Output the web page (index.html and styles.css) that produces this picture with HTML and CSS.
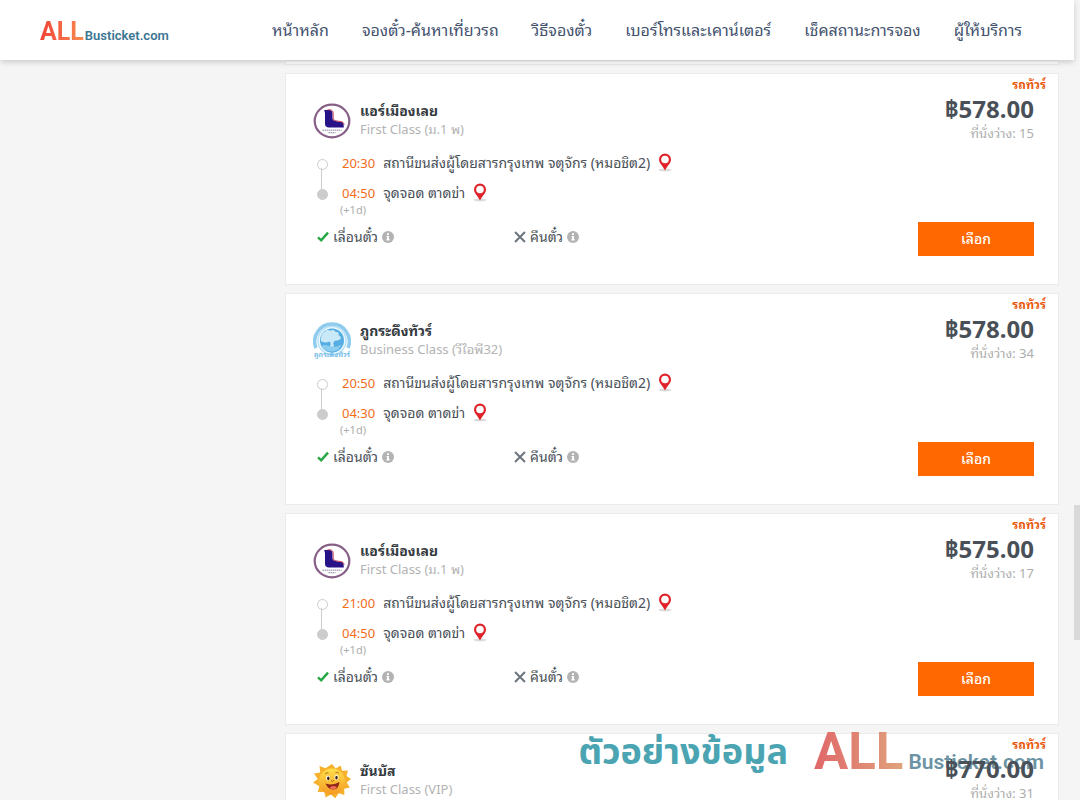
FILE: index.html
```html
<!DOCTYPE html>
<html lang="th">
<head>
    <meta charset="UTF-8">
    <meta name="viewport" content="width=device-width, initial-scale=1.0">
    <title>ALL Busticket.com</title>
    <link rel="stylesheet" href="styles.css">
</head>
<body>
    <!-- Shared icons -->
    <svg class="sprite" aria-hidden="true">
        <defs>
            <linearGradient id="sun-fill" x1="0" y1="0" x2="0" y2="1">
                <stop offset="0" stop-color="#ffe04a"/>
                <stop offset="1" stop-color="#f59a23"/>
            </linearGradient>
        </defs>
        <symbol id="icon-pin" viewBox="0 0 14 20">
            <ellipse cx="7" cy="17" rx="6.500" ry="1.500" fill="#dcdcdc"/>
            <path d="M7 .5A6 6 0 0 0 1 6.500C1 10.500 5 13 7 17.500c2-4.500 6-7 6-11A6 6 0 0 0 7 .5z" fill="#e02329"/>
            <circle cx="7" cy="6.500" r="3.800" fill="#fff"/>
        </symbol>
        <symbol id="icon-check" viewBox="0 0 12 12">
            <path d="M1 6.300l3.200 3L11 1.700" fill="none" stroke="#28a745" stroke-width="2.500"/>
        </symbol>
        <symbol id="icon-cross" viewBox="0 0 12 12">
            <path d="M1 1l10 10M11 1L1 11" fill="none" stroke="#6c757d" stroke-width="2"/>
        </symbol>
        <symbol id="icon-info" viewBox="0 0 12 12">
            <circle cx="6" cy="6" r="6" fill="#b3b3b3"/>
            <path d="M5 2.200h2v1.700H5zM4.500 4.900H7v3.400h.7v1.200H4.300V8.300H5V6.100h-.5z" fill="#fff"/>
        </symbol>
        <symbol id="logo-loei" viewBox="0 0 38 38">
            <ellipse cx="19" cy="19" rx="17.300" ry="16.300" fill="#fff" stroke="#875f86" stroke-width="2.200"/>
            <path d="M11 8h5.500c2 .2 3 1.500 3 3.500v4.500c0 2 1 2.600 3 3l6 1.100c1.800.5 2.300 2 2.300 5.400H16c-2.500 0-4-1.300-4-3.800V11.500c0-1.300-.3-2.500-1-3.500z" fill="#291388"/>
            <path d="M14.500 7.800h2.800c2 .2 2.900 1.500 2.900 3.400v4.600c0 2 1 2.600 3 3l5.800 1.100c1.500.4 2 1.500 2 3" fill="none" stroke="#c54a5d" stroke-width="1"/>
            <path d="M9.500 28.200h19M15.500 30.700h7" stroke="#8d87a2" stroke-width="1" stroke-dasharray="1.500 .5"/>
        </symbol>
        <symbol id="logo-phu" viewBox="0 0 38 38">
            <path d="M3 26A17.300 17.300 0 1 1 35 26" fill="none" stroke="#8fcbed" stroke-width="3.500"/>
            <circle cx="19" cy="18.500" r="14.800" fill="#b5def5"/>
            <circle cx="19" cy="18.500" r="13.500" fill="#e8f6fd"/>
            <circle cx="19" cy="18.500" r="12" fill="#55aee2"/>
            <path d="M8 19c-.5-4 1-8 4-9.500 1-2 4-2 5-.5 2-2 5-1 5.500 1 3-.5 4 2 3 3.500 3 .5 3 3.500.5 4.500-2 1-4 0-5 1.500-1 1.500-1 3 .5 5l-5 .5c1.500-2 1.500-4 0-5.500-3 1.500-7 1-8.500-.5z" fill="#c9e8f8"/>
            <path d="M8.500 24c3-2 6-.5 9 .5s7 .5 11-2c-2 4.500-5 7-9.500 7s-8.500-2-10.500-5.500z" fill="#8ccdf0"/>
            <text class="seal-text" x="19" y="35">ภูกระดึงทัวร์</text>
        </symbol>
        <symbol id="logo-sun" viewBox="0 0 38 38">
            <path d="M19 2l3.700 4.500 5-3 1.300 5.200 6-.2-1.500 5.400L38 17l-4.300 3.600 3.100 4.900-5.600 1.200.2 6.300-5.700-1.700-3.500 5-4.300-3.900-5.200 3-1.400-5.300-6.500 0 1.500-5.800L0 20.500 4.800 17 1 11.500l6.300-1L6.500 4l6 2.200z" fill="#f6b02c"/>
            <circle cx="19" cy="19.500" r="13" fill="url(#sun-fill)"/>
            <ellipse cx="15" cy="16" rx="2" ry="2.600" fill="#fff"/>
            <ellipse cx="23.500" cy="15.300" rx="2" ry="2.600" fill="#fff"/>
            <ellipse cx="15.300" cy="16.300" rx="1.200" ry="1.900" fill="#34210d"/>
            <ellipse cx="23.500" cy="15.600" rx="1.200" ry="1.900" fill="#34210d"/>
            <path d="M12 12q2-2 3.500-1M22.500 10.500q2.500-1 3.500 1M18 18.700q1.500 1.500 3-.5" fill="none" stroke="#a85d11" stroke-width=".9"/>
            <path d="M12.500 21.500q7.500 2.500 14-1.500-1 7.500-6 7.500-5.500 0-8-6z" fill="#902718"/>
            <path d="M16.500 26q3.500-3.500 7.500-.5-3.500 3.500-7.500.5z" fill="#ef6d55"/>
        </symbol>
    </svg>

    <div class="page">
        <header class="topbar">
            <a class="brand" href="#"><span class="brand-all">ALL</span><span class="brand-name">Busticket.com</span></a>
            <nav class="menu">
                <a href="#">หน้าหลัก</a>
                <a href="#">จองตั๋ว-ค้นหาเที่ยวรถ</a>
                <a href="#">วิธีจองตั๋ว</a>
                <a href="#">เบอร์โทรและเคาน์เตอร์</a>
                <a href="#">เช็คสถานะการจอง</a>
                <a href="#">ผู้ให้บริการ</a>
            </nav>
        </header>

        <main class="results">
            <div class="card card-end"></div>

            <article class="card">
                <div class="trip">
                    <div class="operator">
                        <svg class="operator-logo"><use href="#logo-loei"/></svg>
                        <div>
                            <h2>แอร์เมืองเลย</h2>
                            <p>First Class (ม.1 พ)</p>
                        </div>
                    </div>
                    <ul class="stops">
                        <li><time>20:30</time><span>สถานีขนส่งผู้โดยสารกรุงเทพ จตุจักร (หมอชิต2)</span><svg class="pin"><use href="#icon-pin"/></svg></li>
                        <li><time>04:50</time><span>จุดจอด ตาดข่า</span><svg class="pin"><use href="#icon-pin"/></svg></li>
                    </ul>
                    <p class="next-day">(+1d)</p>
                    <div class="policies">
                        <span><svg class="icon"><use href="#icon-check"/></svg>เลื่อนตั๋ว<svg class="icon"><use href="#icon-info"/></svg></span>
                        <span><svg class="icon"><use href="#icon-cross"/></svg>คืนตั๋ว<svg class="icon"><use href="#icon-info"/></svg></span>
                    </div>
                </div>
                <div class="fare">
                    <span class="badge">รถทัวร์</span>
                    <strong class="price">฿578.00</strong>
                    <span class="seats">ที่นั่งว่าง: 15</span>
                    <button type="button">เลือก</button>
                </div>
            </article>

            <article class="card">
                <div class="trip">
                    <div class="operator">
                        <svg class="operator-logo"><use href="#logo-phu"/></svg>
                        <div>
                            <h2>ภูกระดึงทัวร์</h2>
                            <p>Business Class (วีไอพี32)</p>
                        </div>
                    </div>
                    <ul class="stops">
                        <li><time>20:50</time><span>สถานีขนส่งผู้โดยสารกรุงเทพ จตุจักร (หมอชิต2)</span><svg class="pin"><use href="#icon-pin"/></svg></li>
                        <li><time>04:30</time><span>จุดจอด ตาดข่า</span><svg class="pin"><use href="#icon-pin"/></svg></li>
                    </ul>
                    <p class="next-day">(+1d)</p>
                    <div class="policies">
                        <span><svg class="icon"><use href="#icon-check"/></svg>เลื่อนตั๋ว<svg class="icon"><use href="#icon-info"/></svg></span>
                        <span><svg class="icon"><use href="#icon-cross"/></svg>คืนตั๋ว<svg class="icon"><use href="#icon-info"/></svg></span>
                    </div>
                </div>
                <div class="fare">
                    <span class="badge">รถทัวร์</span>
                    <strong class="price">฿578.00</strong>
                    <span class="seats">ที่นั่งว่าง: 34</span>
                    <button type="button">เลือก</button>
                </div>
            </article>

            <article class="card">
                <div class="trip">
                    <div class="operator">
                        <svg class="operator-logo"><use href="#logo-loei"/></svg>
                        <div>
                            <h2>แอร์เมืองเลย</h2>
                            <p>First Class (ม.1 พ)</p>
                        </div>
                    </div>
                    <ul class="stops">
                        <li><time>21:00</time><span>สถานีขนส่งผู้โดยสารกรุงเทพ จตุจักร (หมอชิต2)</span><svg class="pin"><use href="#icon-pin"/></svg></li>
                        <li><time>04:50</time><span>จุดจอด ตาดข่า</span><svg class="pin"><use href="#icon-pin"/></svg></li>
                    </ul>
                    <p class="next-day">(+1d)</p>
                    <div class="policies">
                        <span><svg class="icon"><use href="#icon-check"/></svg>เลื่อนตั๋ว<svg class="icon"><use href="#icon-info"/></svg></span>
                        <span><svg class="icon"><use href="#icon-cross"/></svg>คืนตั๋ว<svg class="icon"><use href="#icon-info"/></svg></span>
                    </div>
                </div>
                <div class="fare">
                    <span class="badge">รถทัวร์</span>
                    <strong class="price">฿575.00</strong>
                    <span class="seats">ที่นั่งว่าง: 17</span>
                    <button type="button">เลือก</button>
                </div>
            </article>

            <article class="card">
                <!-- Sample data watermark, sits behind the fare -->
                <div class="watermark">
                    <span class="watermark-label">ตัวอย่างข้อมูล</span>
                    <span class="watermark-all">ALL</span>
                    <span class="watermark-name">Busticket.com</span>
                </div>
                <div class="trip">
                    <div class="operator">
                        <svg class="operator-logo"><use href="#logo-sun"/></svg>
                        <div>
                            <h2>ซันบัส</h2>
                            <p>First Class (VIP)</p>
                        </div>
                    </div>
                </div>
                <div class="fare">
                    <span class="badge">รถทัวร์</span>
                    <strong class="price">฿770.00</strong>
                    <span class="seats">ที่นั่งว่าง: 31</span>
                </div>
            </article>
        </main>
        <div class="scroll-thumb"></div>
    </div>
</body>
</html>
```
FILE: styles.css
```css
* {
    box-sizing: border-box;
    margin: 0;
    padding: 0;
}

body {
    font-family: "Noto Sans", "Noto Sans Thai Looped", Loma, Waree, Garuda, sans-serif;
    font-size: 14px;
    color: #495057;
    background: #f5f5f5;
}

.sprite {
    position: absolute;
    width: 0;
    height: 0;
}

.page {
    position: relative;
    height: 100vh;
    padding-right: 6px;
    overflow: hidden;
}

.topbar {
    position: relative;
    z-index: 2;
    display: flex;
    align-items: center;
    justify-content: space-between;
    height: 60px;
    padding: 0 52px 0 40px;
    background: #fff;
    box-shadow: 0 2px 6px rgba(0, 0, 0, 0.18);
}

.brand {
    padding-top: 2px;
    font-family: Roboto, sans-serif;
    font-weight: 700;
    text-decoration: none;
}

.brand-all {
    font-size: 25px;
    background: linear-gradient(90deg, #f04438, #f88b50);
    background-clip: text;
    color: transparent;
}

.brand-name {
    margin-left: 1px;
    font-size: 13px;
    font-weight: 600;
    color: #3a7592;
}

.menu {
    display: flex;
    gap: 33px;
}

.menu a {
    font-size: 16px;
    line-height: 24px;
    color: #43526e;
    text-decoration: none;
}

.results {
    display: flex;
    flex-direction: column;
    gap: 8px;
    margin: 0 15px 0 285px;
}

.card {
    position: relative;
    display: flex;
    justify-content: space-between;
    flex-shrink: 0;
    min-height: 212px;
    padding-left: 27px;
    background: #fff;
    border: 1px solid #ebebeb;
}

.card-end {
    min-height: 5px;
}

.trip {
    padding-top: 28px;
}

.operator {
    display: flex;
    gap: 9px;
}

.operator-logo {
    width: 38px;
    height: 38px;
}

.operator h2 {
    font-size: 14px;
    line-height: 18px;
    color: #343a40;
}

.operator p {
    font-size: 13px;
    line-height: 18px;
    color: #b3b3b3;
}

.stops {
    position: relative;
    margin-top: 8px;
    list-style: none;
}

.stops::before {
    content: "";
    position: absolute;
    left: 8px;
    top: 20px;
    width: 1px;
    height: 24px;
    background: #ccc;
}

.stops li {
    display: flex;
    align-items: center;
    gap: 8px;
    height: 30px;
    line-height: 20px;
}

.stops li::before {
    content: "";
    width: 9px;
    height: 9px;
    margin: 3px 6px 0 4px;
    border: 1px solid #ccc;
    border-radius: 50%;
    background: #fff;
}

.stops li:last-child::before {
    background: #ccc;
}

.stops time {
    font-size: 13px;
    color: #f26c1a;
}

.pin {
    width: 14px;
    height: 20px;
}

.next-day {
    height: 14px;
    margin: -4px 0 0 27px;
    font-size: 11px;
    line-height: 12px;
    color: #adadad;
}

.policies {
    display: grid;
    grid-template-columns: 197px auto;
    margin-top: 7px;
    padding-left: 4px;
}

.policies span {
    display: flex;
    align-items: center;
    gap: 4px;
    line-height: 24px;
}

.icon {
    width: 12px;
    height: 12px;
}

.fare {
    position: relative;
    display: flex;
    flex-direction: column;
    align-items: flex-end;
    padding-right: 24px;
}

.badge {
    margin: 4px -12px 0 0;
    font-size: 12px;
    font-weight: 700;
    line-height: 14px;
    color: #e8590c;
}

.price {
    font-size: 24px;
    line-height: 34px;
    color: #495057;
}

.seats {
    font-size: 13px;
    line-height: 14px;
    color: #adadad;
}

.fare button {
    width: 116px;
    height: 34px;
    margin-top: 82px;
    border: none;
    background: #ff6700;
    color: #fff;
    font: inherit;
    font-weight: 500;
    line-height: 20px;
}

/* Watermark */
.watermark {
    position: absolute;
    top: 0;
    right: 14px;
    display: flex;
    align-items: baseline;
    font-family: Roboto, "Noto Sans Thai", sans-serif;
    font-weight: 700;
    line-height: 36px;
    white-space: nowrap;
}

.watermark-label {
    align-self: flex-start;
    margin-right: 26px;
    font-size: 36px;
    color: #4ba4b1;
}

.watermark-all {
    margin: -10px 5px -10px 0;
    padding: 10px 0;
    font-size: 51px;
    background: linear-gradient(90deg, #e0686a, #e0a27b);
    background-clip: text;
    color: transparent;
}

.watermark-name {
    font-size: 21px;
    font-weight: 600;
    color: #6c93a3;
}

.scroll-thumb {
    position: absolute;
    top: 505px;
    right: 0;
    width: 6px;
    height: 135px;
    background: #d9d9d9;
}

.seal-text {
    font-size: 7px;
    font-weight: 700;
    text-anchor: middle;
    fill: #6cb9e6;
}
```
